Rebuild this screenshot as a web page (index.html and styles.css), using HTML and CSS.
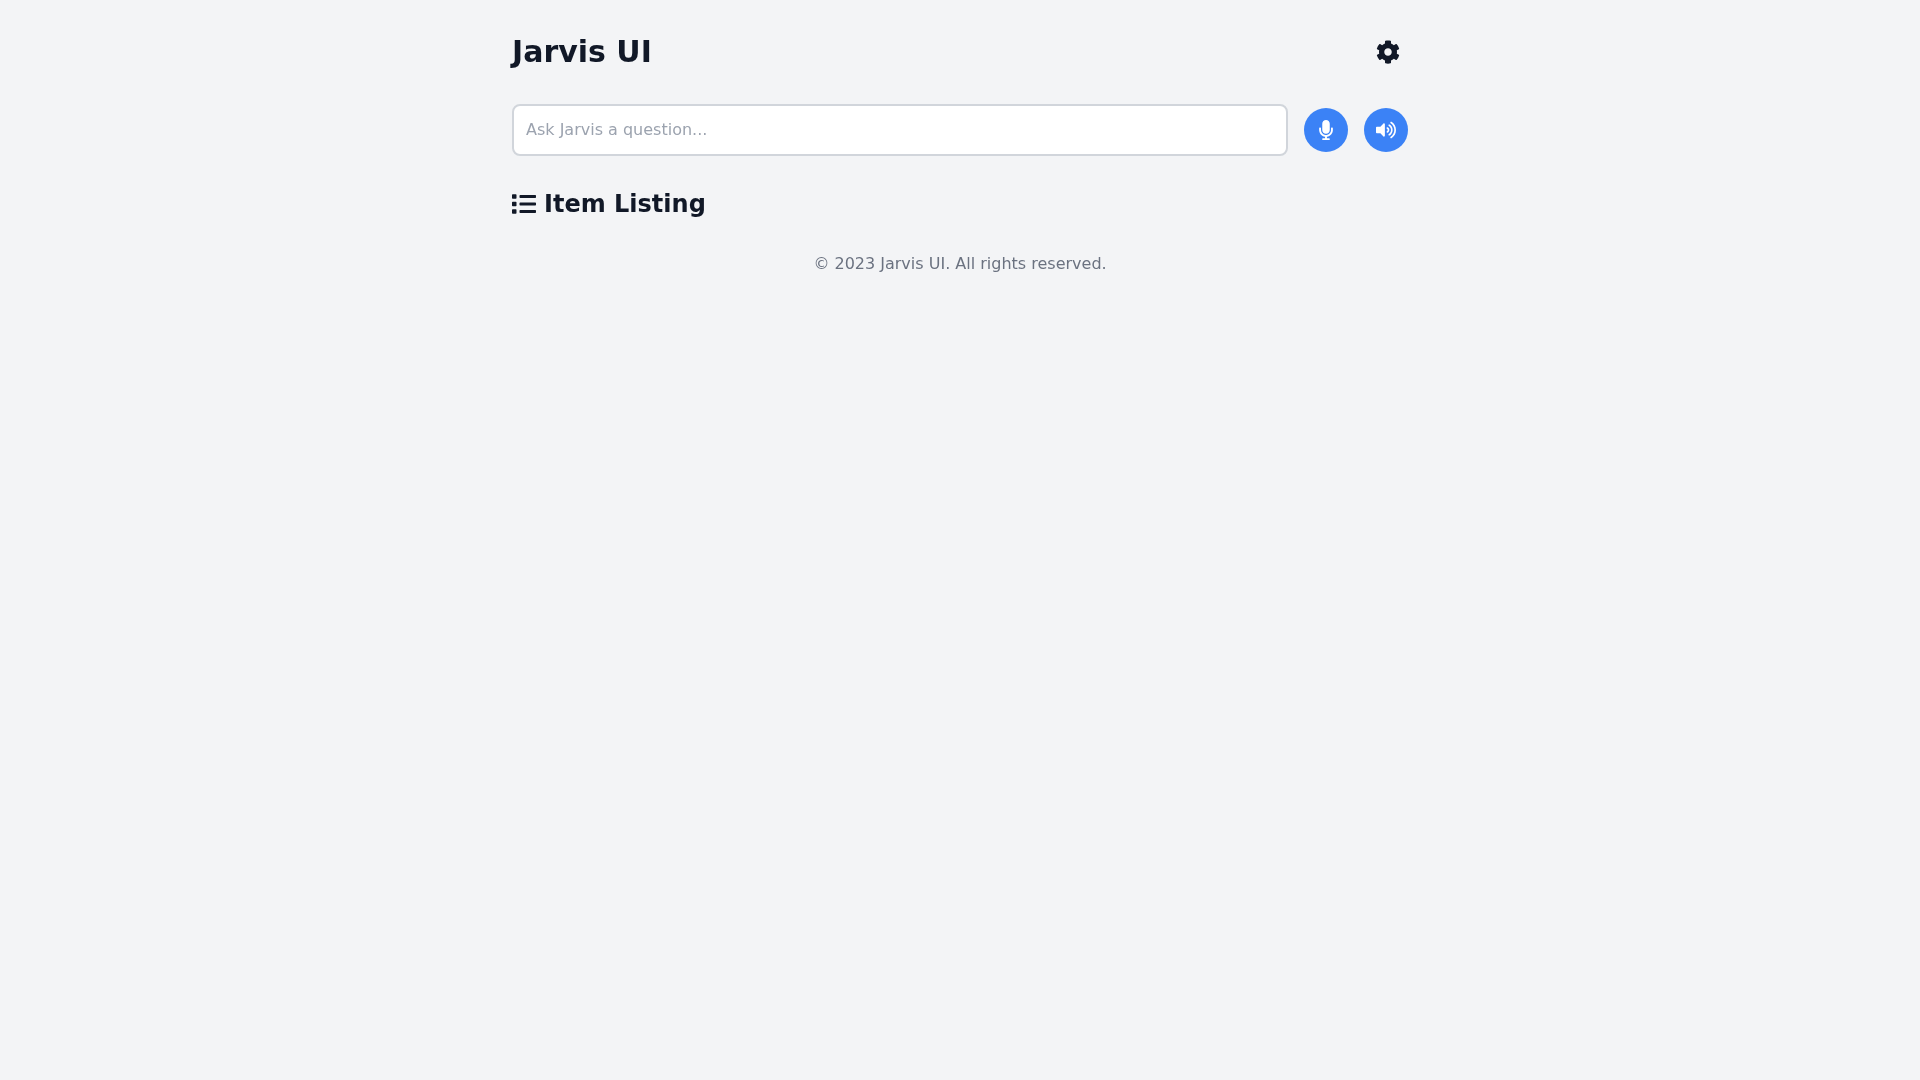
FILE: index.html
```html
<!DOCTYPE html>
<html lang="en">
<head>
<meta charset="utf-8">
<title>Jarvis UI</title>
<link rel="stylesheet" href="styles.css">
</head>
<body>
<main class="container">
  <header class="header">
    <h1 class="title">Jarvis UI</h1>
    <button class="settings" aria-label="Settings">
      <svg class="icon-24" viewBox="0 0 512 512"><path fill="currentColor" d="M487.4 315.7l-42.6-24.6c4.3-23.2 4.3-47 0-70.2l42.6-24.6c4.9-2.8 7.1-8.6 5.5-14-11.1-35.6-30-67.8-54.7-94.6-3.8-4.1-10-5.1-14.8-2.3L380.8 110c-17.9-15.4-38.5-27.3-60.8-35.1V25.8c0-5.6-3.9-10.5-9.4-11.7-36.7-8.2-74.3-7.8-109.2 0-5.5 1.2-9.4 6.1-9.4 11.7V75c-22.2 7.9-42.8 19.8-60.8 35.1L88.7 85.5c-4.9-2.8-11-1.9-14.8 2.3-24.7 26.7-43.6 58.9-54.7 94.6-1.7 5.4.6 11.2 5.5 14L67.3 221c-4.3 23.2-4.3 47 0 70.2l-42.6 24.6c-4.9 2.8-7.1 8.6-5.5 14 11.1 35.6 30 67.8 54.7 94.6 3.8 4.1 10 5.1 14.8 2.3l42.6-24.6c17.9 15.4 38.5 27.3 60.8 35.1v49.2c0 5.6 3.9 10.5 9.4 11.7 36.7 8.2 74.3 7.8 109.2 0 5.5-1.2 9.4-6.1 9.4-11.7v-49.2c22.2-7.9 42.8-19.8 60.8-35.1l42.6 24.6c4.9 2.8 11 1.9 14.8-2.3 24.7-26.7 43.6-58.9 54.7-94.6 1.5-5.5-.7-11.3-5.6-14.1zM256 336c-44.1 0-80-35.9-80-80s35.9-80 80-80 80 35.9 80 80-35.9 80-80 80z"/></svg>
    </button>
  </header>
  <section class="ask">
    <input class="ask-input" type="text" placeholder="Ask Jarvis a question...">
    <button class="round" aria-label="Speak">
      <svg class="icon-mic" viewBox="0 0 352 512"><path fill="currentColor" d="M176 352c53.02 0 96-42.98 96-96V96c0-53.02-42.98-96-96-96S80 42.98 80 96v160c0 53.02 42.98 96 96 96zm160-160h-16c-8.84 0-16 7.16-16 16v48c0 74.8-64.49 134.82-140.79 127.38C96.71 376.89 48 317.11 48 250.3V208c0-8.84-7.16-16-16-16H16c-8.84 0-16 7.16-16 16v40.16c0 89.64 63.97 169.55 152 181.69V464H96c-8.84 0-16 7.16-16 16v16c0 8.84 7.16 16 16 16h160c8.84 0 16-7.16 16-16v-16c0-8.84-7.16-16-16-16h-56v-33.77C285.71 418.47 352 344.9 352 256v-48c0-8.84-7.16-16-16-16z"/></svg>
    </button>
    <button class="round" aria-label="Listen">
      <svg class="icon-vol" viewBox="0 0 576 512"><path fill="currentColor" d="M215.03 71.05L126.06 160H24c-13.26 0-24 10.74-24 24v144c0 13.25 10.74 24 24 24h102.06l88.97 88.95c15.03 15.03 40.97 4.47 40.97-16.97V88.02c0-21.46-25.96-31.98-40.97-16.97zm233.32-51.08c-11.17-7.33-26.18-4.24-33.51 6.95-7.34 11.17-4.22 26.18 6.95 33.51 66.27 43.49 105.82 116.6 105.82 195.58 0 78.98-39.55 152.09-105.82 195.58-11.17 7.32-14.29 22.34-6.95 33.5 7.04 10.71 21.93 14.56 33.51 6.95C528.27 439.58 576 351.33 576 256S528.27 72.43 448.35 19.97zM480 256c0-63.53-32.06-121.94-85.77-156.24-11.19-7.14-26.03-3.82-33.12 7.46s-3.78 26.21 7.41 33.36C408.27 165.97 432 209.11 432 256s-23.73 90.03-63.48 115.42c-11.19 7.14-14.5 22.07-7.41 33.36 6.51 10.36 21.12 15.14 33.12 7.46C447.94 377.94 480 319.54 480 256zm-141.77-76.87c-11.58-6.33-26.19-2.16-32.61 9.45-6.39 11.61-2.16 26.2 9.45 32.61C327.98 228.28 336 241.63 336 256c0 14.38-8.02 27.72-20.92 34.81-11.61 6.41-15.84 21-9.45 32.61 6.44 11.66 21.05 15.8 32.61 9.45 28.23-15.55 45.77-45 45.77-76.88s-17.54-61.32-45.78-76.86z"/></svg>
    </button>
  </section>
  <section class="listing">
    <h2 class="listing-title">
      <svg class="icon-24" viewBox="0 0 512 512"><path fill="currentColor" d="M80 368H16a16 16 0 0 0-16 16v64a16 16 0 0 0 16 16h64a16 16 0 0 0 16-16v-64a16 16 0 0 0-16-16zm0-320H16A16 16 0 0 0 0 64v64a16 16 0 0 0 16 16h64a16 16 0 0 0 16-16V64a16 16 0 0 0-16-16zm0 160H16a16 16 0 0 0-16 16v64a16 16 0 0 0 16 16h64a16 16 0 0 0 16-16v-64a16 16 0 0 0-16-16zm416 176H176a16 16 0 0 0-16 16v32a16 16 0 0 0 16 16h320a16 16 0 0 0 16-16v-32a16 16 0 0 0-16-16zm0-320H176a16 16 0 0 0-16 16v32a16 16 0 0 0 16 16h320a16 16 0 0 0 16-16V80a16 16 0 0 0-16-16zm0 160H176a16 16 0 0 0-16 16v32a16 16 0 0 0 16 16h320a16 16 0 0 0 16-16v-32a16 16 0 0 0-16-16z"/></svg>
      <span>Item Listing</span>
    </h2>
  </section>
  <footer class="footer">© 2023 Jarvis UI. All rights reserved.</footer>
</main>
</body>
</html>
```
FILE: styles.css
```css
* { box-sizing: border-box; }
html, body { margin: 0; padding: 0; }
body {
  min-height: 100vh;
  background: #f3f4f6;
  color: #111827;
  font-family: "DejaVu Sans", sans-serif;
}
.container {
  width: 896px;
  margin: 0 auto;
  padding-top: 32px;
  will-change: transform;
}
.header {
  display: flex;
  justify-content: space-between;
  align-items: center;
  height: 40px;
  margin-bottom: 32px;
}
.title {
  margin: 0;
  font-size: 30px;
  line-height: 36px;
  font-weight: 700;
}
.settings {
  display: flex;
  padding: 8px;
  border: 0;
  background: none;
  color: #111827;
}
.icon-24 { width: 24px; height: 24px; display: block; flex: none; }
.ask {
  display: flex;
  align-items: center;
  gap: 16px;
  margin-bottom: 32px;
}
.ask-input {
  flex: 1;
  min-width: 0;
  padding: 12px;
  border: 2px solid #d1d5db;
  border-radius: 8px;
  background: #fff;
  color: #111827;
  font-family: "DejaVu Sans", sans-serif;
  font-size: 16px;
  line-height: 24px;
  outline: none;
}
.ask-input::placeholder { color: #9ca3af; opacity: 1; }
.round {
  display: flex;
  align-items: center;
  justify-content: center;
  width: 44px;
  height: 44px;
  padding: 0 0 1px;
  border: 0;
  border-radius: 50%;
  background: #3b82f6;
  color: #fff;
}
.icon-mic { width: 14px; height: 20px; display: block; }
.icon-vol { width: 20px; height: 18px; display: block; }
.listing { margin-bottom: 32px; }
.listing-title {
  display: flex;
  align-items: center;
  gap: 8px;
  margin: 0;
  font-size: 24px;
  line-height: 32px;
  font-weight: 700;
}
.footer {
  text-align: center;
  font-size: 16px;
  line-height: 24px;
  color: #6b7280;
}
```
